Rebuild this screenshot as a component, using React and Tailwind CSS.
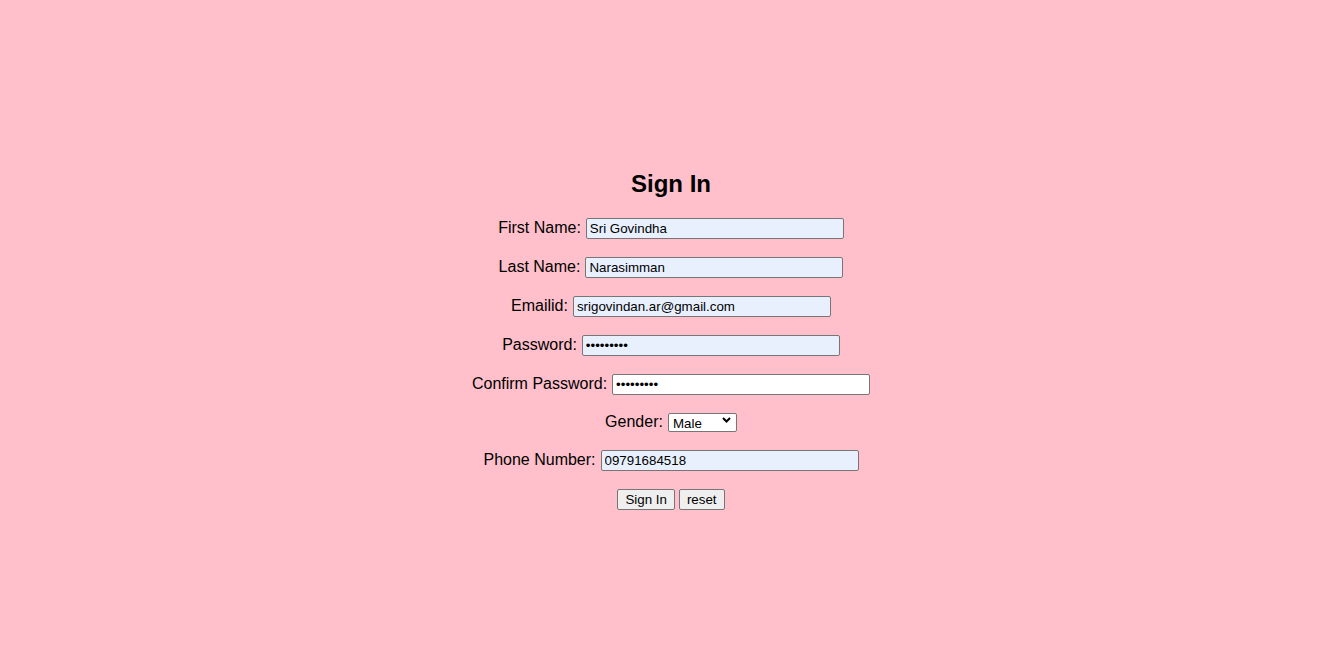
import React from "react";

const font = { fontFamily: '"Liberation Sans", Arial, sans-serif' };

function Field({ label, type = "text", value, filled = true, className = "" }) {
  return (
    <div className={"flex items-center justify-center gap-[5px] h-[21px] " + className}>
      <label className="text-[16px] leading-[18px] pb-[2px] text-black">{label}</label>
      <input
        type={type}
        defaultValue={value}
        className={
          "w-[258px] h-[21px] pl-[3px] pr-[2px] py-[1px] border border-[#767676] rounded-[2px] text-[13.33px] text-black outline-none " +
          (filled ? "bg-[#e8f0fe]" : "bg-white")
        }
      />
    </div>
  );
}

export default function App() {
  return (
    <div className="min-h-[660px] bg-[#ffc0cb] pt-[170px]" style={font}>
      <h2 className="text-[24px] leading-[28px] font-bold text-center text-black">Sign In</h2>
      <form className="flex flex-col">
        <Field label="First Name:" value="Sri Govindha" className="mt-[20px]" />
        <Field label="Last Name:" value="Narasimman" className="mt-[18px]" />
        <Field label="Emailid:" value="srigovindan.ar@gmail.com" className="mt-[18px]" />
        <Field label="Password:" type="password" value="Sri@12345" className="mt-[18px]" />
        <Field label="Confirm Password:" type="password" value="Sri@12345" filled={false} className="mt-[18px]" />

        <div className="flex items-center justify-center gap-[5px] h-[19px] mt-[18px]">
          <label className="text-[16px] leading-[18px] pb-[2px] text-black">Gender:</label>
          <div className="relative">
            <select
              defaultValue="Male"
              className="appearance-none w-[69px] h-[19px] pl-[4px] border border-[#767676] rounded-[2px] bg-white text-[13.33px] text-black outline-none"
            >
              <option>Male</option>
              <option>Female</option>
            </select>
            <svg
              className="absolute right-[6px] top-[6px] pointer-events-none"
              width="9"
              height="6"
              viewBox="0 0 9 6"
            >
              <polyline points="1,1 4.5,4.5 8,1" fill="none" stroke="#000" strokeWidth="2" />
            </svg>
          </div>
        </div>

        <Field label="Phone Number:" value="09791684518" className="mt-[18px]" />

        <div className="flex items-center justify-center gap-[4px] mt-[18px]">
          <button
            type="button"
            className="h-[21px] px-[7px] border border-[#767676] rounded-[2px] bg-[#efefef] text-[13.33px] text-black"
          >
            Sign In
          </button>
          <button
            type="reset"
            className="h-[21px] px-[7px] border border-[#767676] rounded-[2px] bg-[#efefef] text-[13.33px] text-black"
          >
            reset
          </button>
        </div>
      </form>
    </div>
  );
}
